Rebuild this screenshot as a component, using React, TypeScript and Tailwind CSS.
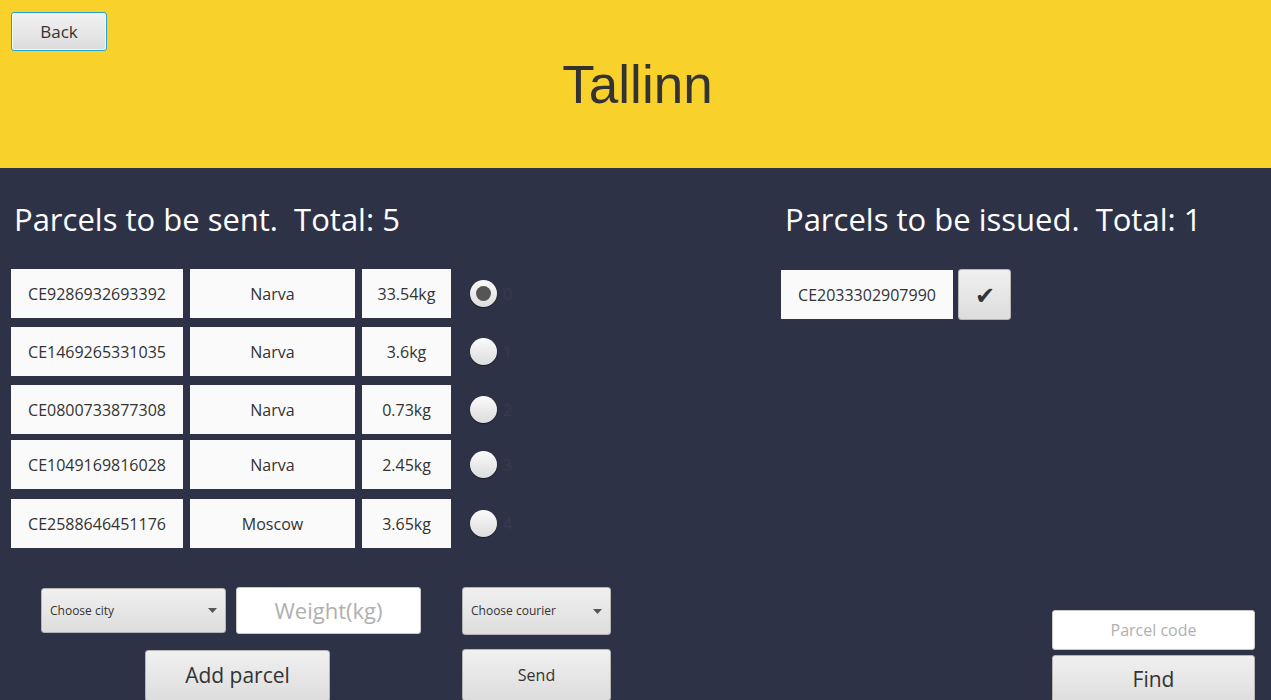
import React from "react";

const font = { fontFamily: '"Open Sans", "Noto Sans", sans-serif' };

type Row = { code: string; city: string; weight: string; mt: string; checked?: boolean };

const rows: Row[] = [
  { code: "CE9286932693392", city: "Narva", weight: "33.54kg", mt: "mt-0", checked: true },
  { code: "CE1469265331035", city: "Narva", weight: "3.6kg", mt: "mt-[9px]" },
  { code: "CE0800733877308", city: "Narva", weight: "0.73kg", mt: "mt-[9px]" },
  { code: "CE1049169816028", city: "Narva", weight: "2.45kg", mt: "mt-[6px]" },
  { code: "CE2588646451176", city: "Moscow", weight: "3.65kg", mt: "mt-[10px]" },
];

function Cell({ w, children }: { w: string; children: React.ReactNode }) {
  return (
    <div className={`${w} h-[49px] bg-[#fafafa] flex items-center justify-center text-[16px] text-[#333333]`}>
      {children}
    </div>
  );
}

function Radio({ checked, label }: { checked?: boolean; label: string }) {
  return (
    <div className="flex items-center ml-[19px] gap-[6px]">
      <div className="w-[27px] h-[27px] rounded-full bg-gradient-to-b from-[#fbfbfb] to-[#dcdcdc] shadow-[0_1px_1px_rgba(0,0,0,0.5)] flex items-center justify-center">
        {checked && <div className="w-[15px] h-[15px] rounded-full bg-[#555555]" />}
      </div>
      <span className="text-[16px] text-[#363a4e]">{label}</span>
    </div>
  );
}

const base =
  "bg-gradient-to-b from-[#f0f0f0] to-[#dddddd] border border-[#b5b5b5] rounded-[3px] text-[#333333] flex items-center";
const btn = `${base} justify-center`;
const combo = `${base} justify-between px-[8px] text-[12px]`;

function Caret() {
  return (
    <svg width="9" height="5" viewBox="0 0 9 5">
      <path d="M0 0 H9 L4.5 5 Z" fill="#555555" />
    </svg>
  );
}

export default function App() {
  return (
    <div className="w-[1271px] h-[700px] overflow-hidden bg-[#2e3247] flex flex-col" style={font}>
      <header className="h-[168px] bg-[#f9d12b] shrink-0">
        <div className="pt-[12px] pl-[11px]">
          <button className="w-[96px] h-[39px] rounded-[3px] border border-[#1ea3d6] bg-gradient-to-b from-[#f2f2f2] to-[#dcdcdc] text-[17px] text-[#333333] shadow-[inset_0_0_0_1px_#ffffff]">
            Back
          </button>
        </div>
        <h1
          className="text-center text-[53px] leading-none text-[#333333] mt-[7px] pl-[4px]"
          style={{ fontFamily: '"Liberation Sans", Arial, sans-serif' }}
        >
          Tallinn
        </h1>
      </header>

      <main className="flex-1 flex">
        <section className="w-[770px] flex flex-col">
          <h2 className="text-[31px] text-white leading-none mt-[36px] ml-[14px] whitespace-pre">
            {"Parcels to be sent.  Total: 5"}
          </h2>
          <div className="mt-[34px] ml-[11px] flex flex-col">
            {rows.map((r, i) => (
              <div key={r.code} className={`flex items-center ${r.mt}`}>
                <Cell w="w-[172px]">{r.code}</Cell>
                <div className="ml-[7px]">
                  <Cell w="w-[165px]">{r.city}</Cell>
                </div>
                <div className="ml-[7px]">
                  <Cell w="w-[89px]">{r.weight}</Cell>
                </div>
                <Radio checked={r.checked} label={String(i)} />
              </div>
            ))}
          </div>
          <div className="flex mt-[39px] ml-[41px]">
            <div className="flex flex-col items-center">
              <div className="flex items-center gap-[10px]">
                <div className={`${combo} w-[185px] h-[45px]`}>
                  <span>Choose city</span>
                  <Caret />
                </div>
                <div className="w-[185px] h-[47px] bg-white rounded-[3px] border border-[#c8c8c8] flex items-center justify-center text-[22px] text-[#b0b0b0]">
                  Weight(kg)
                </div>
              </div>
              <div className={`${btn} w-[185px] h-[52px] mt-[16px] text-[21px] ml-[13px]`}>Add parcel</div>
            </div>
            <div className="flex flex-col ml-[41px]">
              <div className={`${combo} w-[149px] h-[48px]`}>
                <span>Choose courier</span>
                <Caret />
              </div>
              <div className={`${btn} w-[149px] h-[52px] mt-[14px] text-[16px]`}>Send</div>
            </div>
          </div>
        </section>

        <section className="flex-1 flex flex-col">
          <h2 className="text-[31px] text-white leading-none mt-[36px] ml-[15px] whitespace-pre">
            {"Parcels to be issued.  Total: 1"}
          </h2>
          <div className="mt-[34px] ml-[11px] flex items-center">
            <Cell w="w-[172px]">CE2033302907990</Cell>
            <div className={`${btn} w-[53px] h-[51px] ml-[5px] text-[24px] text-[#222222]`}>✔</div>
          </div>
          <div className="flex-1" />
          <div className="flex flex-col ml-[282px] -mb-[3px]">
            <div className="w-[203px] h-[40px] bg-white rounded-[3px] border border-[#c8c8c8] flex items-center justify-center text-[16px] text-[#b0b0b0]">
              Parcel code
            </div>
            <div className={`${btn} w-[203px] h-[50px] mt-[5px] text-[21px]`}>Find</div>
          </div>
        </section>
      </main>
    </div>
  );
}
